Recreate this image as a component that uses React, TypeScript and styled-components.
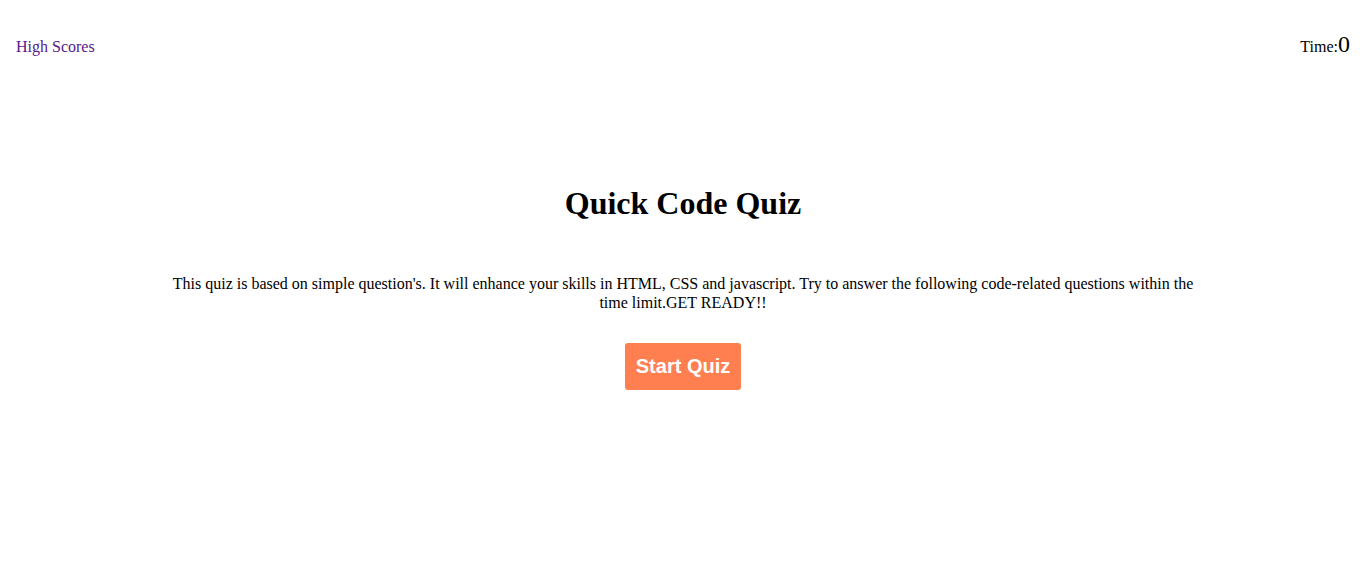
import styled, { createGlobalStyle } from 'styled-components';

const GlobalStyle = createGlobalStyle`
  body {
    margin: 0;
    background: #fff;
    font-family: "Liberation Serif", "Times New Roman", serif;
    color: #000;
  }
`;

function App() {
  return (
    <>
      <GlobalStyle />
      <Header>
        <ScoresLink href='#'>High Scores</ScoresLink>
        <Timer>
          Time:<TimeValue>0</TimeValue>
        </Timer>
      </Header>
      <Main>
        <Title>Quick Code Quiz</Title>
        <Intro>
          This quiz is based on simple question's. It will enhance your skills in HTML, CSS and
          javascript. Try to answer the following code-related questions within the time limit.GET
          READY!!
        </Intro>
        <StartButton>Start Quiz</StartButton>
      </Main>
    </>
  );
}

export default App;

const Header = styled.header`
  display: flex;
  justify-content: space-between;
  align-items: baseline;
  padding: 31px 16px 0 16px;
`;

const ScoresLink = styled.a`
  color: #551a8b;
  font-size: 16px;
  text-decoration: none;
`;

const Timer = styled.div`
  font-size: 16px;
`;

const TimeValue = styled.span`
  font-size: 24px;
`;

const Main = styled.main`
  display: flex;
  flex-direction: column;
  align-items: center;
  padding-top: 127px;
`;

const Title = styled.h1`
  font-size: 32px;
  font-weight: bold;
  margin: 0 0 52px 0;
`;

const Intro = styled.p`
  max-width: 1040px;
  font-size: 16px;
  line-height: 19px;
  text-align: center;
  margin: 0 0 31px 0;
`;

const StartButton = styled.button`
  background: #ff7f50;
  color: #fff;
  border: none;
  border-radius: 3px;
  font-family: "Liberation Sans", Arial, sans-serif;
  font-weight: bold;
  font-size: 20px;
  padding: 12px 11px;
  cursor: pointer;
`;
